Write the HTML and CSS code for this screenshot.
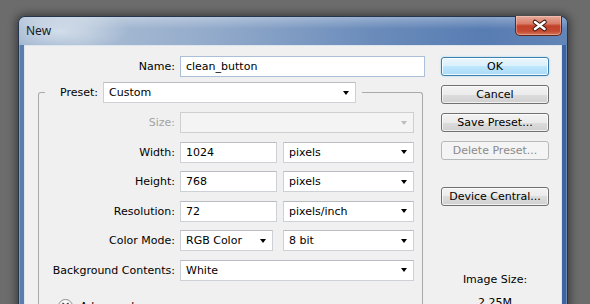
FILE: index.html
```html
<!DOCTYPE html>
<html lang="en">
<head>
  <meta charset="UTF-8">
  <title>New</title>
  <link rel="stylesheet" href="styles.css">
</head>
<body>

  <div class="window">
    <div class="titlebar">
      <span class="title">New</span>
      <div class="close">
        <svg width="47" height="19" viewBox="0 0 47 19">
          <path d="M19 6 L28.5 13 M28.5 6 L19 13" stroke="#3b1711" stroke-width="4.6" stroke-linecap="round" fill="none"/>
          <path d="M19 6 L28.5 13 M28.5 6 L19 13" stroke="#ffffff" stroke-width="2.6" stroke-linecap="round" fill="none"/>
        </svg>
      </div>
    </div>

    <div class="client">
      <div class="form">
        <div class="name-row">
          <span class="label">Name:</span>
          <div class="field name-field">clean_button</div>
        </div>

        <fieldset class="group">
          <legend class="preset">
            <span>Preset:</span>
            <div class="combo preset-combo"><span>Custom</span></div>
          </legend>

          <div class="grid">
            <span class="label disabled">Size:</span>
            <div class="combo wide off"></div>

            <span class="label">Width:</span>
            <div class="field short">1024</div>
            <div class="combo"><span>pixels</span></div>

            <span class="label">Height:</span>
            <div class="field short">768</div>
            <div class="combo"><span>pixels</span></div>

            <span class="label">Resolution:</span>
            <div class="field short">72</div>
            <div class="combo"><span>pixels/inch</span></div>

            <span class="label">Color Mode:</span>
            <div class="combo mode"><span>RGB Color</span></div>
            <div class="combo"><span>8 bit</span></div>

            <span class="label">Background Contents:</span>
            <div class="combo wide"><span>White</span></div>
          </div>

          <div class="advanced">
            <span class="toggle">
              <svg width="15" height="15" viewBox="0 0 15 15">
                <path d="M4.5 4 L7.5 6.5 L10.5 4 M4.5 8 L7.5 10.5 L10.5 8" stroke="#333" stroke-width="1.2" fill="none"/>
              </svg>
            </span>
            <span>Advanced</span>
          </div>
        </fieldset>
      </div>

      <div class="buttons">
        <div class="btn ok">OK</div>
        <div class="btn">Cancel</div>
        <div class="btn">Save Preset...</div>
        <div class="btn off">Delete Preset...</div>
        <div class="btn spaced">Device Central...</div>
        <div class="image-size">Image Size:</div>
        <div class="image-value">2.25M</div>
      </div>
    </div>
  </div>

</body>
</html>
```

FILE: styles.css
```css
* { box-sizing: border-box; }
body { margin: 0; height: 304px; overflow: hidden; background: #6c6c6c; font-family: "DejaVu Sans", sans-serif; font-size: 11px; color: #000; }

.window { margin: 16px 0 0 18px; width: 550px; height: 300px; padding: 0 5px; border: 1px solid #25354c; border-bottom: 0; border-radius: 7px 7px 0 0; background: linear-gradient(90deg, #5a7dad, #4a6ea3 50%, #3d63a1); box-shadow: 0 0 9px 2px rgba(0,0,0,0.45), inset 0 0 0 1px rgba(255,255,255,0.25); }

.titlebar { height: 28px; margin: 0 -5px; padding: 0 5px; display: flex; justify-content: space-between; align-items: flex-start; border-radius: 6px 6px 0 0;
  background:
    linear-gradient(180deg, rgba(255,255,255,0.3) 0, rgba(255,255,255,0) 12px),
    radial-gradient(ellipse 70px 22px at 40px 14px, rgba(214,224,236,0.95), rgba(214,224,236,0)),
    linear-gradient(90deg, #98afcb 0%, #a9bcd3 12%, #93abcb 35%, #6a8bba 65%, #587db3 85%, #6385b7 100%); }
.title { font-family: "Noto Sans", sans-serif; font-size: 12px; padding: 5px 0 0 2px; color: #161c24; }
.close { width: 47px; height: 20px; margin-top: -1px; border: 1px solid #5e261d; border-top: 0; border-radius: 0 0 5px 5px; background: linear-gradient(180deg, #e8aa9c 0%, #d97d68 40%, #c44129 52%, #c34a31 80%, #d6765a 100%); box-shadow: inset 0 0 0 1px rgba(255,220,210,0.4); }
.close svg { display: block; }

.client { height: 260px; display: flex; padding-top: 10px; background: #f0f0f0; border: 1px solid #dde5ee; }

.form { width: 401px; }
.label { text-align: right; padding-right: 5px; line-height: 21px; white-space: nowrap; }
.disabled { color: #a3a3a3; }
.name-row { display: flex; }
.name-row .label { width: 155px; }

.field, .combo { height: 21px; display: flex; align-items: center; padding-left: 5px; background: #fff; border: 1px solid #cdd0d4; border-top-color: #b9bdc2; }
.name-field { width: 245px; border-color: #abc0d8; }
.short { width: 97px; }
.combo { padding-right: 6px; }
.combo::after { content: ""; margin-left: auto; border-left: 3.5px solid transparent; border-right: 3.5px solid transparent; border-top: 4px solid #000; }
.combo.off { background: #f4f4f4; border-color: #cfcfcf; }
.combo.off::after { border-top-color: #bdbdbd; }
.mode { width: 93px; }
.wide { grid-column: 2 / 4; }

.group { margin: 5px 0 0 13px; width: 385px; height: 240px; min-width: 0; padding: 0; border: 1px solid #a9a9a9; border-bottom: 0; border-radius: 3px 3px 0 0; }
.preset { display: flex; align-items: center; gap: 5px; height: 21px; margin-left: 6px; padding: 0 6px 0 15px; }
.preset-combo { width: 253px; }

.grid { display: grid; grid-template-columns: 141px 103px 131px; grid-auto-rows: 21px; row-gap: 8.5px; padding-top: 9px; }

.advanced { display: flex; align-items: center; gap: 7px; margin: 18px 0 0 19px; }
.toggle { width: 15px; height: 15px; border: 1px solid #8d8d8d; border-radius: 50%; background: linear-gradient(#ffffff, #dcdcdc); }
.toggle svg { display: block; margin: -1px; }

.buttons { width: 108px; margin-left: 15px; padding-top: 1px; display: flex; flex-direction: column; gap: 9px; }
.btn { height: 19px; line-height: 17px; text-align: center; border: 1px solid #707070; border-radius: 3px; background: linear-gradient(#f3f3f3 0%, #ebebeb 50%, #dddddd 50%, #d0d0d0 100%); box-shadow: inset 0 0 0 1px rgba(255,255,255,0.7); }
.btn.ok { border-color: #3c7fb1; background: linear-gradient(#eaf6fd 0%, #d9f0fc 50%, #bee6fd 50%, #a9dbf6 100%); box-shadow: inset 0 0 0 1px rgba(255,255,255,0.8), 0 0 2px #8fd0f5; }
.btn.off { border-color: #b5b9bc; background: #f4f4f4; color: #8a8a8a; box-shadow: none; }
.btn.spaced { margin-top: 18px; }
.image-size { margin-top: 58px; text-align: center; line-height: 13px; }
.image-value { text-align: center; line-height: 13px; margin-top: 1px; }
```
